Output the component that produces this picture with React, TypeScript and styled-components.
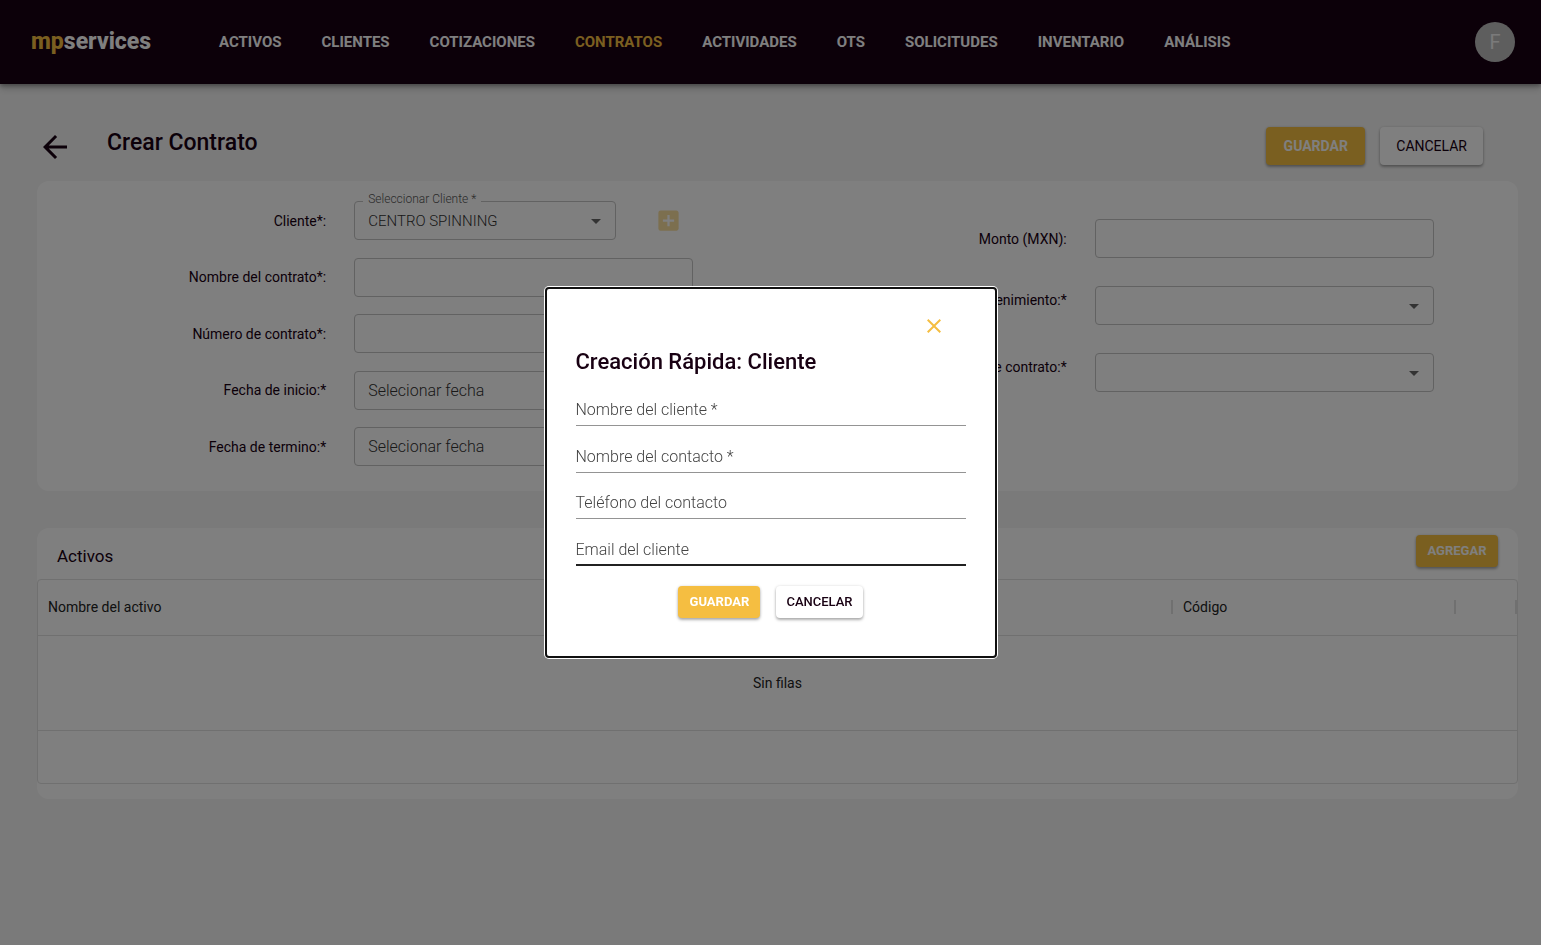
import React from "react";
import styled, { createGlobalStyle, css } from "styled-components";
import { MdAddBox, MdArrowBack, MdArrowDropDown, MdClose } from "react-icons/md";

const GlobalStyle = createGlobalStyle`
  *, *::before, *::after { box-sizing: border-box; }
  body {
    margin: 0;
    min-height: 100vh;
    background: #f5f5f5;
    color: #180012;
    font-family: Roboto, "Liberation Sans", sans-serif;
    font-size: 14px;
  }
  button, input, select { font: inherit; color: inherit; }
`;

const Header = styled.header`
  display: flex;
  align-items: center;
  height: 84px;
  padding: 0 26px 0 31px;
  background: #180012;
  box-shadow: 0 2px 4px rgba(0, 0, 0, 0.3), 0 4px 8px rgba(0, 0, 0, 0.2);
`;

const Logo = styled.a`
  flex: none;
  width: 188px;
  color: #fff;
  font-size: 23px;
  line-height: 28px;
  font-weight: 800;
  text-decoration: none;
`;

const LogoAccent = styled.span`
  color: #f5be41;
`;

const Nav = styled.nav`
  display: flex;
  flex: 1;
  gap: 40px;
`;

const NavLink = styled.a<{ $active?: boolean }>`
  color: ${({ $active }) => ($active ? "#f5be41" : "#fff")};
  font-size: 15px;
  line-height: 20px;
  font-weight: 700;
  text-decoration: none;
`;

const Avatar = styled.button`
  width: 40px;
  height: 40px;
  padding: 0;
  border: 0;
  border-radius: 50%;
  background: #bdbdbd;
  color: #f5f5f5;
  font-size: 20px;
`;

const Main = styled.main`
  padding: 43px 23px 24px 37px;
`;

const TitleBar = styled.div`
  display: flex;
  align-items: flex-start;
  gap: 15px;
  height: 54px;
  padding-right: 35px;
`;

const BackButton = styled.button`
  display: flex;
  margin-top: 2px;
  padding: 0;
  border: 0;
  background: none;
  font-size: 36px;
`;

const PageTitle = styled.h1`
  flex: 1;
  margin: 0;
  padding-left: 19px;
  font-size: 23px;
  line-height: 31px;
  font-weight: 500;
`;

const Button = styled.button<{ $primary?: boolean; $small?: boolean }>`
  border: 0;
  border-radius: 4px;
  background: #fff;
  color: #180012;
  box-shadow: 0 2px 3px rgba(0, 0, 0, 0.3), 0 0 3px rgba(0, 0, 0, 0.12);
  ${({ $small }) =>
    $small
      ? css`
          height: 32px;
          min-width: 82px;
          padding: 0 10px 2px;
          font-size: 13px;
          font-weight: 500;
        `
      : css`
          height: 38px;
          min-width: 99px;
          padding: 0 16px;
          font-size: 14px;
          font-weight: 400;
        `}
  ${({ $primary }) =>
    $primary &&
    css`
      background: #f5be41;
      color: #fff;
      font-weight: 700;
    `}
`;

const Card = styled.section`
  border-radius: 12px;
  background: #fff;
`;

const FormCard = styled(Card)`
  display: grid;
  grid-template-columns: 1fr 1fr;
  padding: 20px 0 25px;
`;

const FormColumn = styled.div<{ $offset?: boolean }>`
  display: flex;
  flex-direction: column;
  ${({ $offset }) =>
    $offset
      ? css`
          gap: 28px;
          padding-top: 18px;
        `
      : css`
          justify-content: space-between;
          height: 265px;
        `}
`;

const FormRow = styled.div<{ $top?: boolean }>`
  display: grid;
  grid-template-columns: 289fr 339fr 56fr;
  column-gap: 28px;
  align-items: ${({ $top }) => ($top ? "start" : "center")};
`;

const FieldLabel = styled.label`
  font-size: 14px;
  line-height: 28px;
  text-align: right;
`;

const fieldBox = css`
  width: 100%;
  height: 39px;
  padding: 0 13px;
  border: 1px solid #c4c4c4;
  border-radius: 4px;
  outline: 0;
  background: #fff;
  color: #333;
  font-size: 16px;
  font-weight: 300;
`;

const TextInput = styled.input`
  ${fieldBox}
  &::placeholder { color: #333; opacity: 1; }
`;

const SelectWrap = styled.div`
  position: relative;
  display: grid;
  flex: 0 1 262px;
  align-items: center;
  > svg {
    grid-area: 1 / 1;
    justify-self: end;
    margin-right: 8px;
    color: #666;
    font-size: 24px;
    pointer-events: none;
    z-index: 1;
  }
`;

const Select = styled.select`
  ${fieldBox}
  grid-area: 1 / 1;
  appearance: none;
  font-size: 15px;
`;

const NotchLabel = styled.label`
  position: absolute;
  top: -10px;
  left: 9px;
  padding: 0 5px;
  background: #fff;
  color: #555;
  font-size: 12px;
  line-height: 16px;
  font-weight: 300;
`;

const InlineFields = styled.div`
  display: flex;
  align-items: center;
  gap: 39px;
`;

const AddButton = styled.button`
  display: flex;
  padding: 0;
  border: 0;
  background: none;
  color: #f5be41;
  font-size: 27px;
  opacity: 0.5;
`;

const AssetsCard = styled(Card)`
  margin-top: 37px;
  padding-bottom: 15px;
`;

const AssetsHeader = styled.div`
  display: flex;
  align-items: flex-start;
  justify-content: space-between;
  height: 51px;
  padding: 7px 20px 0;
`;

const AssetsTitle = styled.h2`
  margin: 0;
  padding-top: 9px;
  font-size: 17px;
  line-height: 24px;
  font-weight: 400;
`;

const TableFrame = styled.div`
  border: 1px solid #e0e0e0;
  border-radius: 4px;
  overflow: hidden;
`;

const Table = styled.table`
  width: 100%;
  border-collapse: collapse;
  table-layout: fixed;
`;

const HeadCell = styled.th<{ $width?: string }>`
  width: ${({ $width }) => $width ?? "auto"};
  height: 55px;
  padding: 0;
  border-bottom: 1px solid #e0e0e0;
  color: #222;
  font-size: 14px;
  font-weight: 400;
  text-align: left;
`;

const HeadCellInner = styled.div`
  height: 14px;
  padding-left: 10px;
  border-right: 2px solid #e0e0e0;
  line-height: 14px;
`;

const EmptyCell = styled.td`
  height: 95px;
  padding: 0;
  border-bottom: 1px solid #e0e0e0;
  color: #222;
  text-align: center;
`;

const FootCell = styled.td`
  height: 53px;
  padding: 0;
`;

const Backdrop = styled.div`
  position: fixed;
  inset: 0;
  z-index: 10;
  display: flex;
  align-items: center;
  justify-content: center;
  background: rgba(0, 0, 0, 0.5);
`;

const Dialog = styled.div`
  width: 452px;
  max-width: 100%;
  padding: 25px 29px 38px;
  border: 2px solid #101010;
  border-radius: 4px;
  background: #fff;
  box-shadow: 0 0 0 1px #fff;
`;

const CloseButton = styled.button`
  display: flex;
  margin: 0 20px 0 auto;
  padding: 0;
  border: 0;
  background: none;
  color: #f5be41;
  font-size: 24px;
`;

const DialogTitle = styled.h2`
  margin: 8px 0 16px;
  font-size: 22px;
  line-height: 32px;
  font-weight: 500;
`;

const DialogFields = styled.div`
  display: flex;
  flex-direction: column;
  justify-content: space-between;
  height: 172px;
`;

const LineField = styled.div`
  display: grid;
`;

const LineLabel = styled.label`
  grid-area: 1 / 1;
  color: #444;
  font-size: 16px;
  line-height: 31px;
  font-weight: 300;
  pointer-events: none;
  z-index: 1;
`;

const LineInput = styled.input<{ $focused?: boolean }>`
  grid-area: 1 / 1;
  width: 100%;
  height: 32px;
  padding: 0;
  border: 0;
  border-bottom: ${({ $focused }) => ($focused ? "2px solid #212121" : "1px solid #949494")};
  outline: 0;
  background: none;
`;

const DialogActions = styled.div`
  display: flex;
  justify-content: center;
  gap: 16px;
  margin-top: 20px;
`;

const navItems = [
  "ACTIVOS",
  "CLIENTES",
  "COTIZACIONES",
  "CONTRATOS",
  "ACTIVIDADES",
  "OTS",
  "SOLICITUDES",
  "INVENTARIO",
  "ANÁLISIS",
];

const contractFields = [
  { id: "nombre", label: "Nombre del contrato*:" },
  { id: "numero", label: "Número de contrato*:" },
  { id: "inicio", label: "Fecha de inicio:*", placeholder: "Selecionar fecha" },
  { id: "termino", label: "Fecha de termino:*", placeholder: "Selecionar fecha" },
];

const contractSelects = [
  { id: "mantenimiento", label: "Tipo de mantenimiento:*" },
  { id: "tipo", label: "Tipo de contrato:*" },
];

const clientFields = [
  { id: "cliente-nombre", label: "Nombre del cliente *" },
  { id: "cliente-contacto", label: "Nombre del contacto *" },
  { id: "cliente-telefono", label: "Teléfono del contacto" },
  { id: "cliente-email", label: "Email del cliente", focused: true },
];

export default function App() {
  return (
    <>
      <GlobalStyle />
      <Header>
        <Logo href="#">
          <LogoAccent>mp</LogoAccent>services
        </Logo>
        <Nav>
          {navItems.map((item) => (
            <NavLink key={item} href="#" $active={item === "CONTRATOS"}>
              {item}
            </NavLink>
          ))}
        </Nav>
        <Avatar type="button">F</Avatar>
      </Header>

      <Main>
        <TitleBar>
          <BackButton type="button" aria-label="Regresar">
            <MdArrowBack />
          </BackButton>
          <PageTitle>Crear Contrato</PageTitle>
          <Button type="button" $primary>GUARDAR</Button>
          <Button type="button">CANCELAR</Button>
        </TitleBar>

        <FormCard>
          <FormColumn>
            <FormRow>
              <FieldLabel htmlFor="cliente">Cliente*:</FieldLabel>
              <InlineFields>
                <SelectWrap>
                  <Select id="cliente">
                    <option>CENTRO SPINNING</option>
                  </Select>
                  <NotchLabel htmlFor="cliente">Seleccionar Cliente *</NotchLabel>
                  <MdArrowDropDown />
                </SelectWrap>
                <AddButton type="button" aria-label="Agregar cliente">
                  <MdAddBox />
                </AddButton>
              </InlineFields>
            </FormRow>
            {contractFields.map(({ id, label, placeholder }) => (
              <FormRow key={id}>
                <FieldLabel htmlFor={id}>{label}</FieldLabel>
                <TextInput id={id} placeholder={placeholder} />
              </FormRow>
            ))}
          </FormColumn>
          <FormColumn $offset>
            <FormRow>
              <FieldLabel htmlFor="monto">Monto (MXN):</FieldLabel>
              <TextInput id="monto" />
            </FormRow>
            {contractSelects.map(({ id, label }) => (
              <FormRow key={id} $top>
                <FieldLabel htmlFor={id}>{label}</FieldLabel>
                <SelectWrap>
                  <Select id={id} />
                  <MdArrowDropDown />
                </SelectWrap>
              </FormRow>
            ))}
          </FormColumn>
        </FormCard>

        <AssetsCard>
          <AssetsHeader>
            <AssetsTitle>Activos</AssetsTitle>
            <Button type="button" $primary $small>AGREGAR</Button>
          </AssetsHeader>
          <TableFrame>
            <Table>
              <thead>
                <tr>
                  <HeadCell><HeadCellInner>Nombre del activo</HeadCellInner></HeadCell>
                  <HeadCell $width="283px"><HeadCellInner>Código</HeadCellInner></HeadCell>
                  <HeadCell $width="61px"><HeadCellInner /></HeadCell>
                </tr>
              </thead>
              <tbody>
                <tr>
                  <EmptyCell colSpan={3}>Sin filas</EmptyCell>
                </tr>
              </tbody>
              <tfoot>
                <tr>
                  <FootCell colSpan={3} />
                </tr>
              </tfoot>
            </Table>
          </TableFrame>
        </AssetsCard>
      </Main>

      <Backdrop>
        <Dialog role="dialog" aria-modal="true" aria-labelledby="dialog-title">
          <CloseButton type="button" aria-label="Cerrar">
            <MdClose />
          </CloseButton>
          <DialogTitle id="dialog-title">Creación Rápida: Cliente</DialogTitle>
          <DialogFields>
            {clientFields.map(({ id, label, focused }) => (
              <LineField key={id}>
                <LineLabel htmlFor={id}>{label}</LineLabel>
                <LineInput id={id} $focused={focused} />
              </LineField>
            ))}
          </DialogFields>
          <DialogActions>
            <Button type="button" $primary $small>GUARDAR</Button>
            <Button type="button" $small>CANCELAR</Button>
          </DialogActions>
        </Dialog>
      </Backdrop>
    </>
  );
}
